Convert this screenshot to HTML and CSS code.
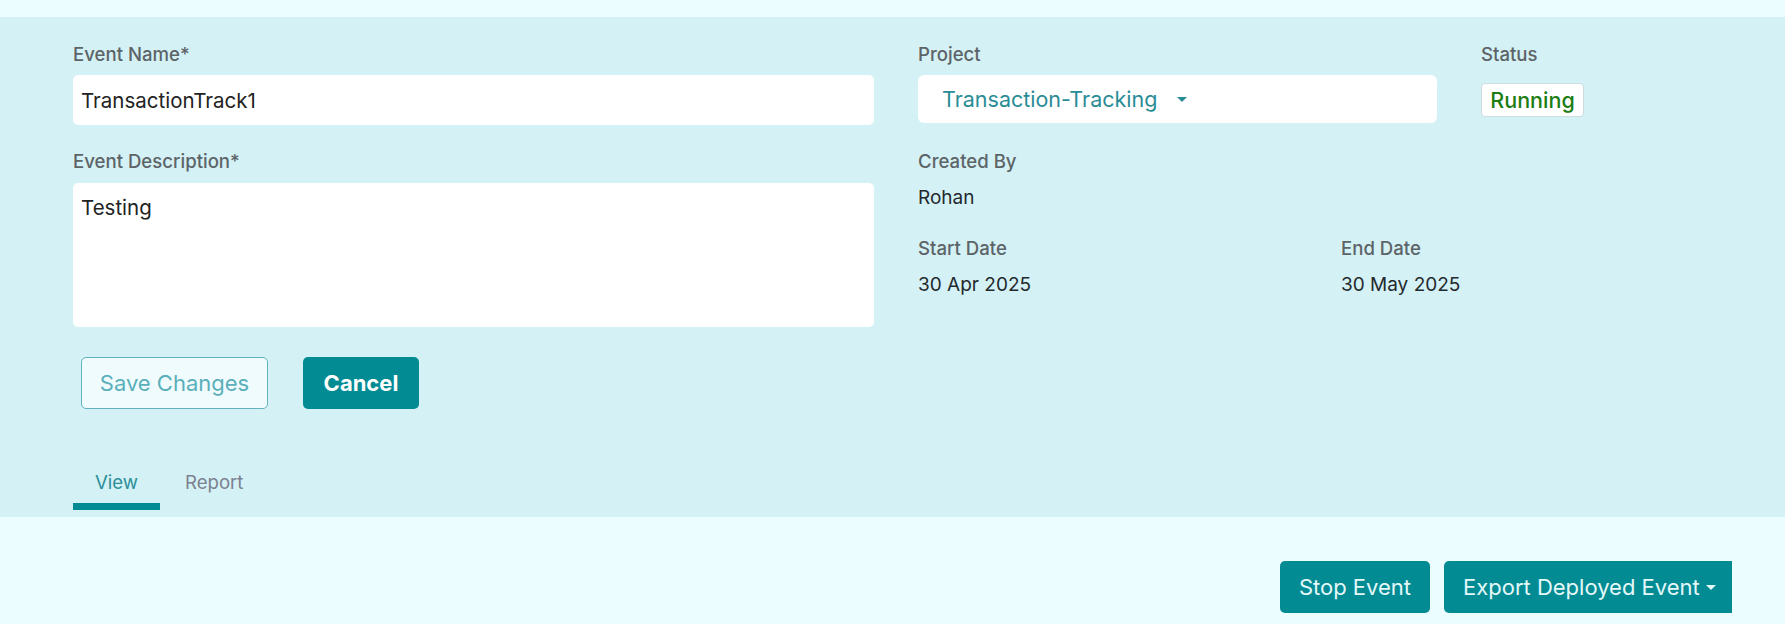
FILE: index.html
```html
<!DOCTYPE html>
<html>
<head>
<meta charset="utf-8">
<link rel="stylesheet" href="styles.css">
</head>
<body>
<div class="topband"></div>
<section class="panel">
  <div class="form">
    <div class="col-left">
      <div class="field">
        <label class="label">Event Name*</label>
        <div class="input">TransactionTrack1</div>
      </div>
      <div class="field">
        <label class="label">Event Description*</label>
        <div class="textarea">Testing</div>
      </div>
      <div class="actions">
        <button class="btn-outline">Save Changes</button>
        <button class="btn-solid">Cancel</button>
      </div>
    </div>
    <div class="col-right">
      <div class="row-top">
        <div class="field project">
          <label class="label">Project</label>
          <div class="select"><span>Transaction-Tracking</span><span class="caret"></span></div>
        </div>
        <div class="field status">
          <label class="label">Status</label>
          <div class="badge">Running</div>
        </div>
      </div>
      <div class="info">
        <div class="label">Created By</div>
        <div class="value">Rohan</div>
      </div>
      <div class="dates">
        <div class="info date-start">
          <div class="label">Start Date</div>
          <div class="value">30 Apr 2025</div>
        </div>
        <div class="info">
          <div class="label">End Date</div>
          <div class="value">30 May 2025</div>
        </div>
      </div>
    </div>
  </div>
  <nav class="tabs">
    <div class="tab active">View</div>
    <div class="tab">Report</div>
  </nav>
</section>
<div class="bottom">
  <button class="btn-action btn-stop">Stop Event</button>
  <button class="btn-action btn-split">Export Deployed Event <span class="caret caret-white"></span></button>
</div>
</body>
</html>
```
FILE: styles.css
```css
* { box-sizing: border-box; }
html, body { margin: 0; padding: 0; }
body {
  background: #ebfdfe;
  font-family: "Inter", "Liberation Sans", sans-serif;
  color: #23292d;
  width: 1785px;
  height: 624px;
  overflow: hidden;
}
.topband { height: 17px; }
.panel {
  background: #d4f1f5;
  height: 500px;
  padding: 25px 73px 0 73px;
  display: flex;
  flex-direction: column;
}
.form { display: flex; gap: 44px; }
.col-left { width: 801px; display: flex; flex-direction: column; }
.col-right { flex: 1; display: flex; flex-direction: column; }
.field { display: flex; flex-direction: column; }
.label {
  font-size: 18.6px;
  line-height: 24px;
  color: #5c6468;
  font-weight: 500;
}
.input {
  margin-top: 9px;
  height: 50px;
  background: #fff;
  border-radius: 5px;
  padding: 0 8px;
  display: flex;
  align-items: center;
  font-size: 20.5px;
  color: #222;
}
.col-left .field + .field { margin-top: 24px; }
.textarea {
  margin-top: 10px;
  height: 144px;
  background: #fff;
  border-radius: 5px;
  padding: 12px 8px;
  font-size: 20.5px;
  line-height: 26px;
  color: #222;
}
.actions { display: flex; gap: 35px; margin-top: 30px; padding-left: 8px; }
.btn-outline, .btn-solid, .btn-action {
  font-family: inherit;
  height: 52px;
  border-radius: 5px;
  font-size: 22px;
  cursor: pointer;
  white-space: nowrap;
}
.btn-outline {
  width: 187px;
  padding: 0;
  background: #effbfd;
  border: 1px solid #62b3bd;
  color: #5aafba;
}
.btn-solid {
  width: 116px;
  padding: 0;
  background: #038b94;
  border: none;
  color: #fff;
  font-weight: 700;
}
.row-top { display: flex; gap: 44px; }
.project { width: 519px; }
.select {
  margin-top: 9px;
  height: 48px;
  background: #fff;
  border-radius: 6px;
  padding: 0 24px;
  display: flex;
  align-items: center;
  gap: 20px;
  font-size: 21.5px;
  color: #2a8c96;
}
.caret {
  display: inline-block;
  width: 0; height: 0;
  border-left: 5px solid transparent;
  border-right: 5px solid transparent;
  border-top: 5px solid #2a8c96;
}
.badge {
  margin-top: 17px;
  align-self: flex-start;
  height: 34px;
  width: 103px;
  background: #fff;
  border: 1px solid #cfdcdf;
  border-radius: 4px;
  display: flex;
  align-items: center;
  justify-content: center;
  font-size: 21.5px;
  font-weight: 500;
  color: #1c7d12;
}
.info { display: flex; flex-direction: column; margin-top: 26px; }
.info .value { margin-top: 13px; font-size: 19px; line-height: 24px; color: #23292d; }
.dates { display: flex; }
.dates .info { margin-top: 26px; }
.date-start { width: 423px; }
.tabs { display: flex; margin-top: 61px; }
.tab {
  font-size: 18.6px;
  line-height: 24px;
  color: #7b8190;
  padding: 0 0 9px;
  height: 40px;
}
.tab.active {
  width: 87px;
  text-align: center;
  color: #2b8f9a;
  border-bottom: 7px solid #038b94;
}
.tab + .tab { margin-left: 25px; }
.bottom {
  display: flex;
  justify-content: flex-end;
  gap: 14px;
  padding: 44px 53px 0 0;
}
.btn-action {
  background: #038b94;
  border: none;
  color: #e3f8f9;
  display: flex;
  align-items: center;
  gap: 6px;
}
.btn-stop { width: 150px; padding: 0; justify-content: center; }
.btn-split { width: 288px; border-radius: 5px 0 0 5px; padding: 0 0 0 19px; }
.caret-white { border-top-color: #e3f8f9; }
```
